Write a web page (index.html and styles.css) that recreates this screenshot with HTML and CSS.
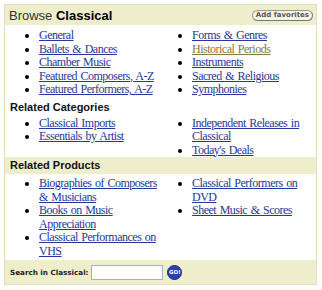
FILE: index.html
```html
<!DOCTYPE html>
<html lang="en">
<head>
  <meta charset="UTF-8">
  <link rel="stylesheet" href="styles.css">
  <title>Browse Classical</title>
</head>
<body>

<div class="browse">
  <div class="browse-head">
    <h2>Browse <b>Classical</b></h2>
    <button class="fav">Add favorites</button>
  </div>

  <div class="cols top">
    <ul>
      <li><a href="#">General</a></li>
      <li><a href="#">Ballets &amp; Dances</a></li>
      <li><a href="#">Chamber Music</a></li>
      <li><a href="#">Featured Composers, A-Z</a></li>
      <li><a href="#">Featured Performers, A-Z</a></li>
    </ul>
    <ul>
      <li><a href="#">Forms &amp; Genres</a></li>
      <li><a href="#" class="visited">Historical Periods</a></li>
      <li><a href="#">Instruments</a></li>
      <li><a href="#">Sacred &amp; Religious</a></li>
      <li><a href="#">Symphonies</a></li>
    </ul>
  </div>

  <h3 class="section">Related Categories</h3>
  <div class="cols">
    <ul>
      <li><a href="#">Classical Imports</a></li>
      <li><a href="#">Essentials by Artist</a></li>
    </ul>
    <ul>
      <li><a href="#">Independent Releases in Classical</a></li>
      <li><a href="#">Today's Deals</a></li>
    </ul>
  </div>

  <h3 class="section shaded">Related Products</h3>
  <div class="cols products">
    <ul>
      <li><a href="#">Biographies of Composers &amp; Musicians</a></li>
      <li><a href="#">Books on Music Appreciation</a></li>
      <li><a href="#">Classical Performances on VHS</a></li>
    </ul>
    <ul>
      <li><a href="#">Classical Performers on DVD</a></li>
      <li><a href="#">Sheet Music &amp; Scores</a></li>
    </ul>
  </div>

  <form class="search">
    <label for="q">Search in Classical:</label>
    <input type="text" id="q">
    <button class="go" type="button">GO!</button>
  </form>
</div>

</body>
</html>
```

FILE: styles.css
```css
body {
  margin: 4px;
  font-family: "Liberation Serif", serif;
  font-size: 12px;
  background: #fff;
}

.browse {
  width: 311px;
  border: 1px solid #e0e0b8;
}

.browse-head {
  display: flex;
  justify-content: space-between;
  align-items: center;
  height: 20px;
  padding: 0 3px 0 4px;
  background-color: #eeeecc;
}

.browse-head h2 {
  margin: 0;
  font-family: "Liberation Sans", sans-serif;
  font-size: 13px;
  font-weight: normal;
  color: #333;
}

.browse-head h2 b {
  color: #000;
}

.fav {
  height: 11px;
  margin-top: 1px;
  padding: 0 3px;
  font-family: "DejaVu Sans", sans-serif;
  font-size: 7px;
  font-weight: bold;
  line-height: 9px;
  color: #555;
  background-color: #f4f4e4;
  border: 1px solid #999;
  border-right-color: #777;
  border-bottom-color: #777;
  border-radius: 6px;
}

.cols {
  display: grid;
  grid-template-columns: 153px 1fr;
}

.cols.top {
  padding-top: 4px;
}

.cols.products {
  padding-top: 3px;
}

.cols ul {
  margin: 0;
  padding-left: 34px;
  line-height: 13.5px;
  letter-spacing: -0.5px;
  word-spacing: 1px;
}

.cols ul li {
  list-style: disc;
}

a {
  color: #26389c;
}

a.visited {
  color: #8c7444;
}

.section {
  margin: 0;
  padding: 4px 5px 3px;
  font-family: "Liberation Sans", sans-serif;
  font-size: 11px;
  font-weight: bold;
  line-height: 13px;
  color: #111;
}

.shaded {
  padding: 2px 5px;
  background-color: #eeeecc;
}

.search {
  display: flex;
  align-items: center;
  height: 24px;
  margin: 2px 0 0;
  padding: 0 5px;
  background-color: #eeeecc;
}

.search label {
  margin-right: 3px;
  font-family: "DejaVu Sans", sans-serif;
  font-size: 7.2px;
  font-weight: bold;
  color: #222;
}

.search input {
  width: 70px;
  height: 13px;
  margin: 0 4px 0 0;
  padding: 0;
  border: 1px solid #a8b0c8;
}

.go {
  width: 15px;
  height: 15px;
  padding: 0;
  font-family: "DejaVu Sans", sans-serif;
  font-size: 5.5px;
  font-weight: bold;
  color: #fff;
  background-color: #2b3fb5;
  border: 1px solid #1a2680;
  border-radius: 50%;
}
```
